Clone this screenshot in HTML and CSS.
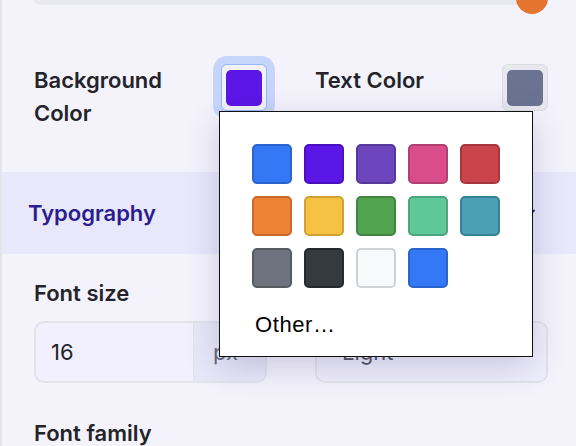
FILE: index.html
```html
<!DOCTYPE html>
<html lang="en">
<head>
<meta charset="utf-8">
<title>Style settings</title>
<link rel="stylesheet" href="styles.css">
</head>
<body>
<div class="page">
  <div class="section">
    <div class="slider">
      <div class="track"></div>
      <div class="thumb"></div>
    </div>
    <div class="color-row">
      <div class="field">
        <span class="label">Background Color</span>
        <div class="picker">
          <button class="swatch-btn active"><span class="chip" style="background:#5b17e6"></span></button>
          <div class="popup">
            <div class="grid">
              <span class="sw c-blue"></span>
              <span class="sw c-indigo"></span>
              <span class="sw c-purple"></span>
              <span class="sw c-pink"></span>
              <span class="sw c-red"></span>
              <span class="sw c-orange"></span>
              <span class="sw c-yellow"></span>
              <span class="sw c-green"></span>
              <span class="sw c-mint"></span>
              <span class="sw c-teal"></span>
              <span class="sw c-gray"></span>
              <span class="sw c-dark"></span>
              <span class="sw c-light"></span>
              <span class="sw c-blue2"></span>
            </div>
            <div class="other">Other…</div>
          </div>
        </div>
      </div>
      <div class="field">
        <span class="label">Text Color</span>
        <button class="swatch-btn"><span class="chip" style="background:#6b7390"></span></button>
      </div>
    </div>
  </div>

  <div class="band">
    <span class="band-title">Typography</span>
    <svg class="chev" width="12" height="8" viewBox="0 0 12 8"><path d="M1 1.5 L6 6.5 L11 1.5" fill="none" stroke="#2b1d8f" stroke-width="1.8" stroke-linecap="round" stroke-linejoin="round"/></svg>
  </div>

  <div class="section">
    <div class="form-row">
      <div class="form-field">
        <span class="label">Font size</span>
        <div class="input-group">
          <span class="input-value">16</span>
          <span class="addon">px</span>
        </div>
      </div>
      <div class="form-field">
        <span class="label">Font weight</span>
        <div class="select">
          <span class="select-value">Light</span>
          <svg width="14" height="9" viewBox="0 0 14 9"><path d="M1 1.5 L7 7.5 L13 1.5" fill="none" stroke="#555" stroke-width="1.8" stroke-linecap="round" stroke-linejoin="round"/></svg>
        </div>
      </div>
    </div>
    <div class="label family">Font family</div>
  </div>
</div>
</body>
</html>
```

FILE: styles.css
```css
* { box-sizing: border-box; }

html, body {
  margin: 0;
  padding: 0;
  background: #f4f3fc;
  overflow: hidden;
}

body {
  font-family: Inter, "Noto Sans", sans-serif;
  color: #222228;
}

.page {
  border-left: 2px solid #e4e4ec;
  min-height: 446px;
}

.section {
  padding: 0 28px 0 32px;
}

.slider {
  position: relative;
  margin-top: -7px;
  height: 12px;
}

.track {
  height: 12px;
  border-radius: 6px;
  background: #e8e8ef;
}

.thumb {
  position: absolute;
  right: 0;
  top: -11px;
  width: 32px;
  height: 32px;
  border-radius: 50%;
  background: #e57431;
}

.color-row {
  margin-top: 59px;
  display: grid;
  grid-template-columns: 1fr 1fr;
  column-gap: 48px;
}

.field {
  display: flex;
  justify-content: space-between;
  align-items: flex-start;
  gap: 16px;
}

.label {
  font-size: 22px;
  font-weight: 600;
  line-height: 33px;
  color: #232329;
}

.picker {
  position: relative;
}

.swatch-btn {
  display: block;
  width: 46px;
  height: 47px;
  padding: 4px;
  border: 1px solid #dcdce5;
  border-radius: 6px;
  background: #e8e8ef;
  cursor: pointer;
}

.swatch-btn.active {
  background: #f2f2f6;
  border-color: #97b8f7;
  box-shadow: 0 0 0 8px #c6d6fb;
}

.chip {
  display: block;
  width: 36px;
  height: 36px;
  border-radius: 5px;
}

.popup {
  position: absolute;
  top: 100%;
  left: -2px;
  width: 314px;
  background: #fff;
  border: 1px solid #111;
  padding: 32px 32px 18px 32px;
  box-shadow: 0 10px 32px rgba(40, 30, 110, 0.2);
  z-index: 10;
}

.grid {
  display: grid;
  grid-template-columns: repeat(5, 40px);
  gap: 12px;
}

.sw {
  display: block;
  width: 40px;
  height: 40px;
  border-radius: 5px;
  border: 2px solid;
}

.c-blue   { background: #3478f6; border-color: #2a63cc; }
.c-indigo { background: #5b17e6; border-color: #4a10bf; }
.c-purple { background: #6b46bd; border-color: #55389a; }
.c-pink   { background: #d94d8a; border-color: #b23f71; }
.c-red    { background: #cc444b; border-color: #a4363c; }
.c-orange { background: #ee8336; border-color: #c86b28; }
.c-yellow { background: #f5c244; border-color: #d3a235; }
.c-green  { background: #52a451; border-color: #408542; }
.c-mint   { background: #60c799; border-color: #4aa47c; }
.c-teal   { background: #4ba0b6; border-color: #3a8194; }
.c-gray   { background: #6d737c; border-color: #575c63; }
.c-dark   { background: #353a3f; border-color: #26292d; }
.c-light  { background: #f8f9fa; border-color: #d0d1d3; }
.c-blue2  { background: #3478f6; border-color: #2a63cc; }

.other {
  margin-top: 24px;
  padding-left: 3px;
  font-family: "Liberation Sans", Arial, sans-serif;
  font-size: 22px;
  letter-spacing: 0.6px;
  color: #000;
  line-height: normal;
}

.band {
  margin-top: 42px;
  height: 82px;
  background: #e9e8fb;
  display: flex;
  align-items: center;
  justify-content: space-between;
  padding: 0 41px 0 26px;
}

.band-title {
  font-size: 22px;
  font-weight: 600;
  color: #2b1d8f;
  line-height: 33px;
}

.chev { display: block; }

.form-row {
  margin-top: 23px;
  display: grid;
  grid-template-columns: 1fr 1fr;
  column-gap: 48px;
}

.form-field {
  display: flex;
  flex-direction: column;
  gap: 11px;
}

.input-group {
  display: flex;
  height: 62px;
  border: 2px solid #e3e3ec;
  border-radius: 10px;
  background: #f1f0fc;
  overflow: hidden;
}

.input-value {
  flex: 1;
  display: flex;
  align-items: center;
  padding-left: 15px;
  font-size: 22px;
  color: #222228;
}

.addon {
  width: 72px;
  display: flex;
  align-items: center;
  padding-left: 19px;
  border-left: 1px solid #e3e3ec;
  background: #e9e8f8;
  font-size: 22px;
  color: #6a6a78;
}

.select {
  display: flex;
  align-items: center;
  justify-content: space-between;
  height: 62px;
  border: 2px solid #e3e3ec;
  border-radius: 10px;
  background: #f1f0fc;
  padding: 0 30px 0 25px;
}

.select-value {
  font-size: 22px;
  color: #55555f;
}

.family {
  display: block;
  margin-top: 34px;
}
```
